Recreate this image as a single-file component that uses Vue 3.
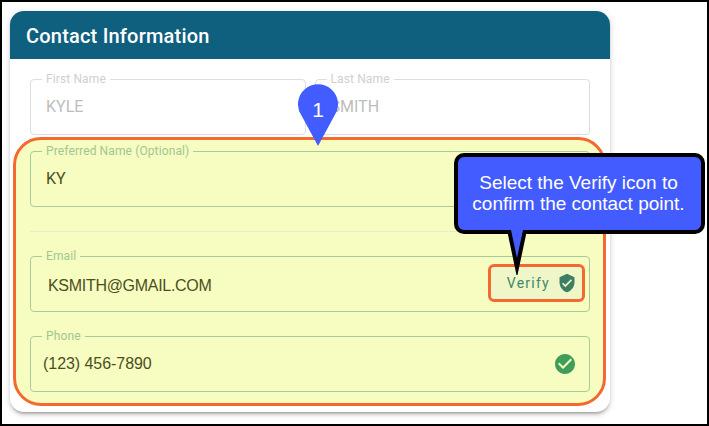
<template>
  <div class="frame">
    <section class="card">
      <header class="card-head">Contact Information</header>
      <div class="card-body">
        <div class="name-row">
          <fieldset class="field disabled">
            <legend>First Name</legend>
            <span class="value">KYLE</span>
          </fieldset>
          <fieldset class="field disabled">
            <legend>Last Name</legend>
            <span class="value">SMITH</span>
          </fieldset>
        </div>

        <div class="highlight">
          <fieldset class="field">
            <legend>Preferred Name (Optional)</legend>
            <span class="value">KY</span>
          </fieldset>
          <hr class="divider" />
          <fieldset class="field email">
            <legend>Email</legend>
            <span class="value arial">KSMITH@GMAIL.COM</span>
            <button class="verify" type="button">
              <span>Verify</span>
              <svg viewBox="0 0 24 24" width="20" height="20" aria-hidden="true">
                <path d="M10,17L6,13L7.41,11.59L10,14.17L16.59,7.58L18,9M12,1L3,5V11C3,16.55 6.84,21.74 12,23C17.16,21.74 21,16.55 21,11V5L12,1Z" />
              </svg>
            </button>
          </fieldset>
          <fieldset class="field phone">
            <legend>Phone</legend>
            <span class="value arial">(123) 456-7890</span>
            <svg class="ok" viewBox="0 0 24 24" width="24" height="24" aria-hidden="true">
              <path d="M12 2C6.5 2 2 6.5 2 12S6.5 22 12 22 22 17.5 22 12 17.5 2 12 2M10 17L5 12L6.41 10.59L10 14.17L17.59 6.58L19 8L10 17Z" />
            </svg>
          </fieldset>
        </div>
      </div>
    </section>

    <!-- annotations drawn over the screenshot -->
    <div class="pin">
      <svg viewBox="0 0 40 62" width="40" height="62" aria-hidden="true">
        <path d="M20 62 L3.5 31.5 A20 20 0 1 1 36.5 31.5 Z" />
      </svg>
      <span>1</span>
    </div>

    <div class="callout">
      <svg class="tail" viewBox="0 0 20 46" width="20" height="46" aria-hidden="true">
        <path class="tail-edge" d="M0 0 L20 0 L10.5 45 L9.5 45 Z" />
        <path class="tail-fill" d="M4 0 L16 0 L10 28 Z" />
      </svg>
      <p>Select the Verify icon to<br />confirm the contact point.</p>
    </div>
  </div>
</template>

<script setup>
</script>

<style>
html,
body {
  margin: 0;
  background: #fff;
}
</style>

<style scoped>
.frame {
  position: relative;
  box-sizing: border-box;
  width: 709px;
  height: 426px;
  padding: 9px 0 0 8px;
  border: 2px solid #000;
  background: #fff;
  overflow: hidden;
  font-family: Roboto, "Liberation Sans", sans-serif;
}

.card {
  width: 600px;
  height: 401px;
  border-radius: 14px;
  background: #fff;
  box-shadow: 0 3px 3px -2px rgba(0, 0, 0, 0.3), 0 3px 4px rgba(0, 0, 0, 0.12), 0 1px 8px rgba(0, 0, 0, 0.1);
}

.card-head {
  box-sizing: border-box;
  height: 48px;
  padding: 2px 0 0 16px;
  border-radius: 14px 14px 0 0;
  background: #0f5f7f;
  color: #fff;
  font-size: 20px;
  font-weight: 500;
  letter-spacing: 0.2px;
  line-height: 46px;
}

.card-body {
  padding: 15px 4px 6px 3px;
}

.name-row {
  display: grid;
  grid-template-columns: 1fr 1fr;
  gap: 9px;
  margin: 0 16px 2px 17px;
}

.highlight {
  box-sizing: border-box;
  height: 269px;
  padding: 6px 13px 0 14px;
  border: 3px solid #f4692f;
  border-radius: 28px;
  background: #f7fcc1;
}

.field {
  display: flex;
  align-items: center;
  justify-content: space-between;
  box-sizing: border-box;
  height: 61px;
  min-width: 0;
  margin: 0;
  padding: 0 0 6px;
  border: 1px solid #a9cb98;
  border-radius: 4px;
}

.field legend {
  margin-left: 11px;
  padding: 0 4px;
  color: #a0c792;
  font-size: 12px;
  letter-spacing: 0.12px;
  line-height: 11px;
}

.value {
  margin-left: 15px;
  color: #4b4f1e;
  font-size: 16px;
  line-height: 20px;
}

.arial {
  font-family: "Liberation Sans", Arial, sans-serif;
}

.disabled {
  border-color: #dedede;
}

.disabled legend {
  color: #cfcfcf;
}

.disabled .value {
  color: #bdbdbd;
}

.divider {
  height: 1px;
  margin: 24px 0 19px;
  border: 0;
  background: #e7edc4;
}

.email .value {
  margin: 4px 0 0 17px;
  letter-spacing: -0.3px;
}

.phone {
  margin-top: 19px;
}

.phone .value {
  margin-left: 12px;
  letter-spacing: -0.05px;
}

.verify {
  display: flex;
  align-items: center;
  justify-content: flex-end;
  gap: 7px;
  box-sizing: border-box;
  width: 97px;
  height: 38px;
  margin: 0 4px 2px 0;
  padding: 0 5px 0 0;
  border: 3px solid #f4692f;
  border-radius: 6px;
  background: #eff6c8;
  color: #43876a;
  font-family: Roboto, sans-serif;
  font-size: 14px;
  letter-spacing: 1.25px;
}

.verify svg {
  fill: #3f7d65;
}

.ok {
  margin-right: 12px;
  fill: #3f9e58;
}

.pin {
  position: absolute;
  left: 296px;
  top: 82px;
  width: 40px;
  height: 62px;
}

.pin svg {
  display: block;
  fill: #435cff;
}

.pin span {
  position: absolute;
  left: 0;
  right: 0;
  top: 13px;
  color: #fff;
  font-family: "Liberation Sans", Arial, sans-serif;
  font-size: 21px;
  line-height: 26px;
  text-align: center;
}

.callout {
  position: absolute;
  left: 452px;
  top: 151px;
  box-sizing: border-box;
  width: 251px;
  height: 81px;
  border: 4px solid #000;
  border-radius: 10px;
  background: #435cff;
}

.callout p {
  position: relative;
  margin: 0;
  padding: 15px 2px 0 0;
  color: #fff;
  font-family: "Liberation Sans", Arial, sans-serif;
  font-size: 19px;
  line-height: 21px;
  text-align: center;
}

.tail {
  position: absolute;
  left: 49px;
  top: 73px;
  overflow: visible;
}

.tail-edge {
  fill: #000;
}

.tail-fill {
  fill: #435cff;
}
</style>
